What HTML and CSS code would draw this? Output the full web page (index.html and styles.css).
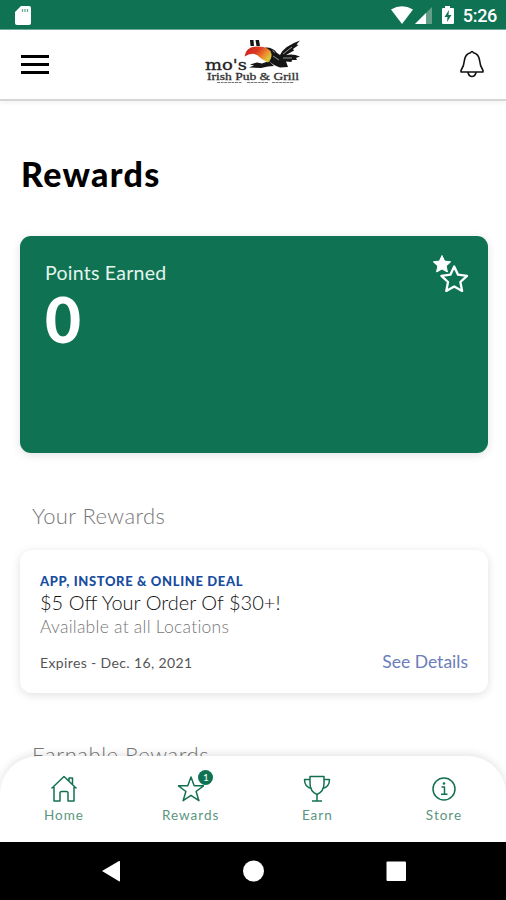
FILE: index.html
```html
<!DOCTYPE html>
<html lang="en">
<head>
<meta charset="utf-8">
<title>Rewards</title>
<link rel="stylesheet" href="styles.css">
</head>
<body>
<div class="phone">
  <div class="status">
    <svg class="sd" width="16" height="20" viewBox="0 0 16 20"><path fill="#fff" d="M6 0H14Q16 0 16 2V17Q16 19 14 19H2Q0 19 0 17V6Z"/><path d="M7.500 3v3M10 3v3M12.500 3v3" stroke="#6da98f" stroke-width="1.300"/></svg>
    <div class="status-right">
      <svg width="64" height="20" viewBox="0 0 64 20"><path fill="#fff" d="M1 3.500Q12-3 23 3.500L12 18Z"/><path fill="#639f88" d="M42 1V18H25Z"/><path fill="#fff" d="M36 7V18H25Z"/><path fill="#fff" d="M55 0h5v2h3q1 0 1 1V17q0 1-1 1H53q-1 0-1-1V3q0-1 1-1h2z"/><path fill="#0f7353" d="M59 4l-4.500 7h3l-.5 5 4.500-7h-3z"/></svg>
      <span class="clock">5:26</span>
    </div>
  </div>
  <header class="header">
    <div class="menu"><i></i><i></i><i></i></div>
    <svg class="logo" width="100" height="48" viewBox="0 0 100 48">
      <defs><linearGradient id="beak" x1="0" x2="1" y1="0" y2=".5"><stop offset="0" stop-color="#c71f1f"/><stop offset=".5" stop-color="#dd3a22"/><stop offset=".8" stop-color="#ee8b2c"/><stop offset="1" stop-color="#d9c63d"/></linearGradient></defs>
      <path fill="#151515" d="M46 2h3.500l.5 6H46.500zM51.500 2H55l1 6h-3.500z"/>
      <path fill="#151515" d="M61 9.500Q69 9 73 15L76 17Q80 8 96 2.500L92.500 6.500L94.500 7L89 11L90 12.500L82 17Q89 15.500 96 18.500L92 20L93 22L88 22L87.500 24L82 23.500L84 29L76 29.500Q69 27 65 23L62 15Z"/>
      <path fill="#151515" d="M46 26.500L53 24.500L58 25.500L65 23L70 28L64 28.500L57 30L45 29.500L50 27.500Z"/>
      <path fill="url(#beak)" d="M40.500 18.500Q42 8 54 8.500Q66 8.500 67.500 16Q68 21 64 24.500Q58 22 53 17Q48 14 40.500 18.500Z"/>
      <path d="M68.500 12.500l2.500 2M69 18l6 4M79 16l9-7M79 20h9" fill="none" stroke="#a9bab2" stroke-width=".8"/>
      <text class="logo-top" x="1" y="31.500" textLength="42" lengthAdjust="spacingAndGlyphs">mo's</text>
      <text class="logo-main" x="3" y="41.500" textLength="92" lengthAdjust="spacingAndGlyphs">Irish Pub &amp; Grill</text>
      <path d="M13 44.500H38M43 44.500H64M68 44.500H90" stroke="#777" stroke-width="1" stroke-dasharray="3 .6"/>
    </svg>
    <svg class="bell" width="26" height="30" viewBox="0 0 26 30" fill="none" stroke="#111" stroke-width="1.600" stroke-linejoin="round"><path d="M11.500 3.800Q13 1.200 14.500 3.800Q19.500 5 20.500 11Q21 17 24 21.500V23H2V21.500Q5 17 5.500 11Q6.500 5 11.500 3.800ZM9 23.500Q10 27.500 13 27.500T17 23.500"/></svg>
  </header>
  <main class="content">
    <h1>Rewards</h1>
    <section class="points">
      <div><div class="points-label">Points Earned</div><div class="points-value">0</div></div>
      <svg width="38" height="42" viewBox="0 0 38 42"><path fill="#fff" stroke="#fff" stroke-linejoin="round" d="M10 1.500l2.600 5.600 6.100.7-4.500 4.200 1.200 6-5.400-3-5.400 3 1.200-6L1.300 7.800l6.100-.7z"/><path fill="#0f7353" stroke="#0f7353" stroke-width="5" d="M22.200 12.500l3.800 8.200 9 1.100-6.600 6.200 1.700 8.900-7.900-4.400-7.900 4.400 1.700-8.900-6.600-6.200 9-1.100z"/><path fill="none" stroke="#fff" stroke-width="2.300" stroke-linejoin="round" d="M22.200 12.500l3.800 8.200 9 1.100-6.600 6.200 1.700 8.900-7.900-4.400-7.900 4.400 1.700-8.900-6.600-6.200 9-1.100z"/></svg>
    </section>
    <h2 class="your">Your Rewards</h2>
    <article class="deal">
      <div class="tag">APP, INSTORE &amp; ONLINE DEAL</div>
      <div class="title">$5 Off Your Order Of $30+!</div>
      <div class="where">Available at all Locations</div>
      <div class="foot"><span class="expires">Expires - Dec. 16, 2021</span><a class="details">See Details</a></div>
    </article>
    <h2 class="earnable">Earnable Rewards</h2>
  </main>
  <nav class="tabs">
    <div class="tab"><svg width="30" height="30" viewBox="0 0 30 30"><path d="M2.500 14.500L15 2.500l12.500 12M5 13v14h6v-8q0-1.500 1.500-1.500h5q1.500 0 1.500 1.500v8h6V13M20 7V4h3.500v6.500"/></svg><span class="t-home">Home</span></div>
    <div class="tab"><svg width="30" height="30" viewBox="0 0 30 30"><path d="M15 3l3.200 8.800h9.300l-7.400 5.700 2.800 9.200L15 21.300l-7.900 5.400 2.800-9.200-7.400-5.700h9.300z"/></svg><b class="badge">1</b><span class="t-rewards">Rewards</span></div>
    <div class="tab"><svg width="30" height="30" viewBox="0 0 30 30"><path d="M8 2.500h14v7q0 8-7 11-7-3-7-11zM8 5.500H2.500q0 8 7.500 9M22 5.500h5.500q0 8-7.500 9M15 20.500v6.500M10 27h10"/></svg><span class="t-earn">Earn</span></div>
    <div class="tab"><svg width="30" height="30" viewBox="0 0 30 30"><circle cx="15" cy="15" r="11"/><path d="M12.500 13H15.500V20M12 20.300h6.500"/><circle class="dot" cx="15" cy="9.500" r="1.300"/></svg><span class="t-store">Store</span></div>
  </nav>
  <footer class="keys">
    <svg width="506" height="58" viewBox="0 0 506 58" fill="#fff"><path d="M102 29L119 19Q120 18.500 120 20V38.500Q120 40 119 39.300Z"/><circle cx="253.500" cy="29" r="10.500"/><rect x="386.500" y="19.500" width="19.500" height="19.500" rx="1"/></svg>
  </footer>
</div>
</body>
</html>
```
FILE: styles.css
```css
* { box-sizing: border-box; }
body { margin: 0; background: #fff; font-family: Lato, "Open Sans", sans-serif; }
h1, h2 { margin: 0; }
svg { display: block; flex: none; }
.phone { width: 506px; height: 900px; overflow: hidden; display: flex; flex-direction: column; }
.status { height: 30px; flex: none; background: #0f7353; border-bottom: 1px solid #73ab98; display: flex; justify-content: space-between; padding: 6px 9px 0 15px; }
.status-right { display: flex; gap: 9px; }
.clock { font: 500 18px/20px Roboto, sans-serif; color: #fff; letter-spacing: -.3px; }
.header { height: 71px; flex: none; border-bottom: 2px solid #d5d5d5; box-shadow: 0 2px 4px #0000000d; display: flex; align-items: flex-start; justify-content: space-between; padding: 0 21px; }
.menu { width: 28px; padding-top: 25px; display: grid; gap: 5px; }
.menu i { height: 3px; background: #000; }
.logo { margin: 8px 0 0; }
.logo-top { font: 400 15px "DejaVu Serif", serif; fill: #222; stroke: #222; stroke-width: .3px; }
.logo-main { font: 400 10px "Liberation Serif", serif; fill: #333; stroke: #333; stroke-width: .3px; }
.bell { margin: 19px 0 0; }
.content { flex: 1; min-height: 0; padding: 0 18px 0 20px; display: flex; flex-direction: column; }
h1 { font-size: 34px; font-weight: 900; line-height: 42px; margin: 52px 0 41px 1px; letter-spacing: 1.3px; color: #000; }
.points { height: 217px; flex: none; background: #0f7353; border-radius: 11px; box-shadow: 0 2px 10px #0000001f; display: flex; justify-content: space-between; padding: 18px 18px 0 25px; color: #fff; }
.points-label { font-size: 19.500px; line-height: 38px; color: #e4f3ec; letter-spacing: .25px; }
.points-value { font-size: 62px; font-weight: 900; line-height: 54px; }
h2 { font-size: 22px; font-weight: 300; line-height: 28px; color: #777; letter-spacing: .4px; margin-left: 12px; white-space: nowrap; }
.your { margin-top: 49px; }
.deal { height: 143px; flex: none; margin-top: 20px; border-radius: 12px; background: #fff; box-shadow: 0 2px 10px #00000021; padding: 21px 20px 0; }
.tag { font-size: 13px; font-weight: 900; line-height: 20px; color: #184ca0; letter-spacing: .64px; }
.title { font-size: 20px; font-weight: 300; line-height: 24px; margin-top: -1px; color: #111; }
.where { font-size: 17.500px; font-weight: 300; line-height: 25px; color: #777; letter-spacing: .25px; }
.foot { display: flex; justify-content: space-between; align-items: center; margin-top: 9px; height: 26px; }
.expires { font-size: 14px; color: #555; padding-top: 3px; letter-spacing: .37px; }
.details { font-size: 17.500px; color: #6b7dba; }
.earnable { margin-top: 48px; letter-spacing: .55px; }
.tabs { height: 86px; flex: none; position: relative; background: #fff; border-radius: 38px 38px 0 0; box-shadow: 0 -2px 8px #0000001c; display: grid; grid-template-columns: repeat(4, 126.670px); justify-content: center; padding: 18px 0 0 2px; }
.tab { position: relative; display: flex; flex-direction: column; align-items: center; }
.tab svg { fill: none; stroke: #14714f; stroke-width: 1.500; stroke-linejoin: round; }
.tab .dot { fill: #14714f; stroke: none; }
.tab span { font-size: 13.500px; line-height: 20px; margin-top: 1px; color: #5b9680; letter-spacing: 1px; }
.badge { position: absolute; left: 71px; top: -4px; width: 15px; height: 15px; border-radius: 50%; background: #0f7353; color: #fff; font-size: 10px; font-weight: 400; line-height: 15px; text-align: center; }
.keys { height: 58px; flex: none; background: #000; position: relative; }
```
